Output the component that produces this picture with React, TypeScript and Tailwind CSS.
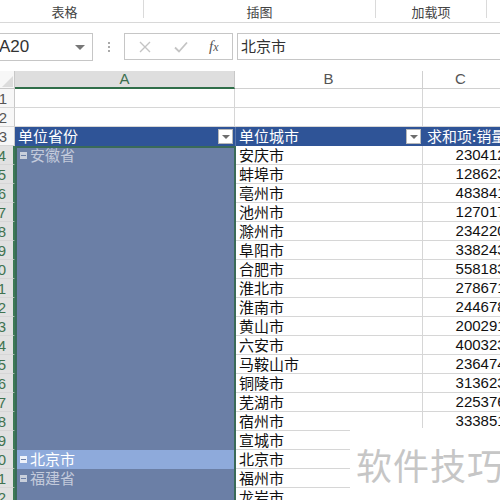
import React from "react";

const cities = [
  "安庆市", "蚌埠市", "亳州市", "池州市", "滁州市", "阜阳市", "合肥市", "淮北市",
  "淮南市", "黄山市", "六安市", "马鞍山市", "铜陵市", "芜湖市", "宿州市", "宣城市",
  "北京市", "福州市", "龙岩市",
];
const nums = [
  "2304125", "1286231", "4838412", "1270176", "2342203", "3382431", "5581836", "2786715",
  "2446782", "2002915", "4003236", "2364747", "3136237", "2253761", "3338517", "", "", "", "",
];

const font = { fontFamily: '"Noto Sans CJK SC", "Liberation Sans", sans-serif' };

function Dropdown() {
  return (
    <div className="w-[15px] h-[15px] bg-white border border-[#b8b8b8] flex items-center justify-center">
      <div className="w-0 h-0 border-l-[4px] border-r-[4px] border-t-[4px] border-l-transparent border-r-transparent border-t-[#6d6d6d]" />
    </div>
  );
}

function Collapse({ dim }: { dim?: boolean }) {
  return (
    <div className={`w-[7px] h-[7px] flex items-center justify-center mr-[3px] ${dim ? "bg-[#c9cfdb]" : "bg-[#eef2fa]"}`}>
      <div className="w-[5px] h-[1px] bg-[#6b7fa6]" />
    </div>
  );
}

function RowHead({ n, sel }: { n: number; sel: boolean }) {
  return (
    <div
      className={`w-[15px] shrink-0 h-full overflow-hidden flex justify-end items-center pr-[7px] border-b border-[#d6d6d6] ${
        sel ? "bg-[#e1e1e1] text-[#3f7350] border-r-2 border-r-[#3c7a55]" : "bg-[#f7f7f7] text-[#555] border-r border-r-[#c8c8c8]"
      }`}
    >
      <span className="text-[15px] leading-none whitespace-nowrap" style={{ fontFamily: '"Liberation Sans", sans-serif' }}>
        {n}
      </span>
    </div>
  );
}

export default function App() {
  return (
    <div className="w-[500px] h-[500px] overflow-hidden bg-white relative text-[#222]" style={font}>
      {/* ribbon group labels */}
      <div className="h-[23px] flex items-start border-b border-[#d8d8d8] bg-white text-[13px] text-[#444]">
        <div className="w-[144px] h-[18px] border-r border-[#dadada] flex items-center justify-center pr-[14px] pt-[5px]">表格</div>
        <div className="w-[232px] h-[18px] border-r border-[#dadada] flex items-center justify-center pt-[5px]">插图</div>
        <div className="w-[111px] h-[18px] border-r border-[#dadada] flex items-center justify-center pt-[5px]">加载项</div>
      </div>
      {/* formula bar */}
      <div className="h-[48px] flex items-start pt-[10px] bg-white">
        <div className="w-[93px] h-[28px] border border-l-0 border-[#c6c6c6] flex items-center justify-between pr-[7px]">
          <span className="text-[17px] text-[#333] -ml-[1px]" style={{ fontFamily: '"Liberation Sans", sans-serif' }}>A20</span>
          <div className="w-0 h-0 border-l-[5px] border-r-[5px] border-t-[5px] border-l-transparent border-r-transparent border-t-[#777]" />
        </div>
        <div className="w-[31px] h-[28px] flex flex-col items-center justify-center gap-[2px]">
          <div className="w-[2px] h-[2px] bg-[#aaa]" />
          <div className="w-[2px] h-[2px] bg-[#aaa]" />
          <div className="w-[2px] h-[2px] bg-[#aaa]" />
        </div>
        <div className="w-[109px] h-[27px] border border-[#c6c6c6] flex items-center">
          <svg width="14" height="14" viewBox="0 0 14 14" className="ml-[13px]">
            <path d="M2 2L12 12M12 2L2 12" stroke="#c4c4c4" strokeWidth="1.4" />
          </svg>
          <svg width="16" height="14" viewBox="0 0 16 14" className="ml-[21px]">
            <path d="M2 7.5L6 11.5L14 2.5" stroke="#c4c4c4" strokeWidth="1.8" fill="none" />
          </svg>
          <span className="ml-[20px] text-[15px] italic text-[#555]" style={{ fontFamily: '"Liberation Serif", serif' }}>
            f<span className="text-[12px]">x</span>
          </span>
        </div>
        <div className="w-[4px]" />
        <div className="flex-1 h-[27px] border border-r-0 border-[#c6c6c6] flex items-center pl-[3px]">
          <span className="text-[15px] text-[#333]">北京市</span>
        </div>
      </div>
      {/* column headers */}
      <div className="h-[18px] flex">
        <div className="w-[15px] shrink-0 h-full border-r border-b border-[#c8c8c8] bg-[#f7f7f7] relative overflow-hidden">
          <div className="absolute right-[1px] bottom-[1px] w-0 h-0 border-t-[11px] border-t-transparent border-r-[11px] border-r-[#dcdcdc]" />
        </div>
        <div className="w-[220px] shrink-0 h-full bg-[#dedede] border-r border-[#c8c8c8] border-b-2 border-b-[#2f6e49] flex items-center justify-center text-[15px] text-[#3b6e4e]" style={{ fontFamily: '"Liberation Sans", sans-serif' }}>A</div>
        <div className="w-[188px] shrink-0 h-full bg-white border-r border-b border-[#d0d0d0] flex items-center justify-center text-[15px] text-[#555]" style={{ fontFamily: '"Liberation Sans", sans-serif' }}>B</div>
        <div className="w-[96px] shrink-0 h-full bg-white border-r border-b border-[#d0d0d0] flex items-center justify-center text-[15px] text-[#555] pr-[20px]" style={{ fontFamily: '"Liberation Sans", sans-serif' }}>C</div>
      </div>
      {/* rows */}
      <div className="flex flex-col">
        {[1, 2].map((n) => (
          <div key={n} className="h-[19px] flex">
            <RowHead n={n} sel={false} />
            <div className="w-[220px] shrink-0 border-r border-b border-[#d6d6d6]" />
            <div className="w-[188px] shrink-0 border-r border-b border-[#d6d6d6]" />
            <div className="w-[96px] shrink-0 border-r border-b border-[#d6d6d6]" />
          </div>
        ))}
        <div className="h-[19px] flex">
          <RowHead n={3} sel={false} />
          <div className="w-[220px] shrink-0 bg-[#2f5497] flex items-center justify-between pl-[3px] pr-[2px] text-white text-[15px]">
            <span>单位省份</span>
            <Dropdown />
          </div>
          <div className="w-[188px] shrink-0 bg-[#2f5497] flex items-center justify-between pl-[3px] pr-[2px] text-white text-[15px] border-l border-[#5a77ad]">
            <span>单位城市</span>
            <Dropdown />
          </div>
          <div className="w-[96px] shrink-0 bg-[#2f5497] flex items-center pl-[4px] text-white text-[15px] whitespace-nowrap overflow-hidden">
            求和项:销量
          </div>
        </div>
        {cities.map((c, i) => {
          const n = i + 4;
          const isBj = n === 20;
          let aContent: React.ReactNode = null;
          if (n === 4)
            aContent = (
              <div className="flex items-center text-[#c3cadb]"><Collapse dim />安徽省</div>
            );
          if (n === 20)
            aContent = (
              <div className="flex items-center text-white"><Collapse />北京市</div>
            );
          if (n === 21)
            aContent = (
              <div className="flex items-center text-[#c3cadb]"><Collapse dim />福建省</div>
            );
          return (
            <div key={n} className="h-[19px] flex">
              <RowHead n={n} sel={true} />
              <div className={`w-[220px] shrink-0 flex items-center pl-[5px] text-[15px] ${isBj ? "bg-[#8eaadb]" : "bg-[#6b7fa6]"}`}>
                {aContent}
              </div>
              <div className="w-[188px] shrink-0 border-l border-r border-b border-[#d6d6d6] flex items-center pl-[3px] text-[15px] text-[#111]">
                {c}
              </div>
              <div className="w-[96px] shrink-0 border-r border-b border-[#d6d6d6] flex items-center justify-end pr-[4px] text-[15px] text-[#111]" style={{ fontFamily: '"Liberation Sans", sans-serif' }}>
                {nums[i]}
              </div>
            </div>
          );
        })}
      </div>
      {/* selection outline */}
      <div className="absolute left-[15px] top-[146px] w-[221px] h-[380px] border-2 border-[#3a6a58] pointer-events-none" />
      {/* watermark */}
      <div className="absolute left-[350px] top-[428px] w-[150px] h-[72px] bg-white flex items-center pl-[6px]">
        <span className="text-[36px] text-[#c6c6c6] tracking-[1px] whitespace-nowrap">软件技巧</span>
      </div>
    </div>
  );
}
